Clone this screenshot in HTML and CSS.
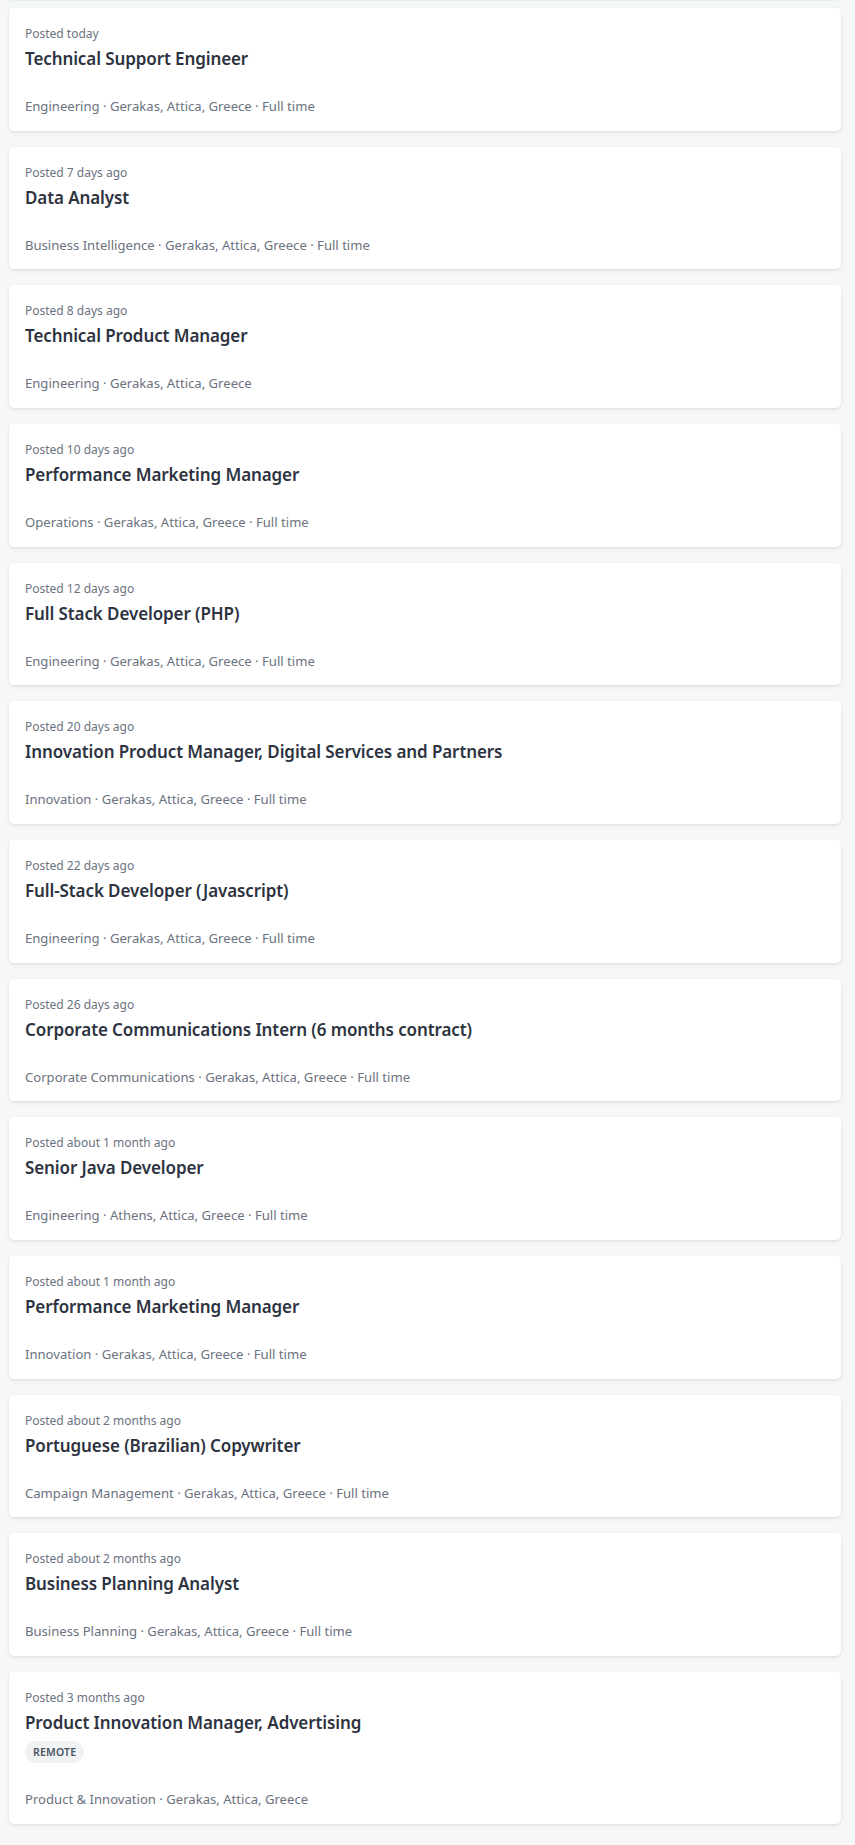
FILE: index.html
```html
<!DOCTYPE html>
<html>
<head>
<meta charset="utf-8">
<link rel="stylesheet" href="styles.css">
</head>
<body>
<div class="topline"></div>
<ul class="jobs">
  <li class="card"><div class="posted">Posted today</div><div class="title">Technical Support Engineer</div><div class="meta">Engineering · Gerakas, Attica, Greece · Full time</div></li>
  <li class="card"><div class="posted">Posted 7 days ago</div><div class="title">Data Analyst</div><div class="meta">Business Intelligence · Gerakas, Attica, Greece · Full time</div></li>
  <li class="card"><div class="posted">Posted 8 days ago</div><div class="title">Technical Product Manager</div><div class="meta">Engineering · Gerakas, Attica, Greece</div></li>
  <li class="card"><div class="posted">Posted 10 days ago</div><div class="title">Performance Marketing Manager</div><div class="meta">Operations · Gerakas, Attica, Greece · Full time</div></li>
  <li class="card"><div class="posted">Posted 12 days ago</div><div class="title">Full Stack Developer (PHP)</div><div class="meta">Engineering · Gerakas, Attica, Greece · Full time</div></li>
  <li class="card"><div class="posted">Posted 20 days ago</div><div class="title">Innovation Product Manager, Digital Services and Partners</div><div class="meta">Innovation · Gerakas, Attica, Greece · Full time</div></li>
  <li class="card"><div class="posted">Posted 22 days ago</div><div class="title">Full-Stack Developer (Javascript)</div><div class="meta">Engineering · Gerakas, Attica, Greece · Full time</div></li>
  <li class="card"><div class="posted">Posted 26 days ago</div><div class="title">Corporate Communications Intern (6 months contract)</div><div class="meta">Corporate Communications · Gerakas, Attica, Greece · Full time</div></li>
  <li class="card"><div class="posted">Posted about 1 month ago</div><div class="title">Senior Java Developer</div><div class="meta">Engineering · Athens, Attica, Greece · Full time</div></li>
  <li class="card"><div class="posted">Posted about 1 month ago</div><div class="title">Performance Marketing Manager</div><div class="meta">Innovation · Gerakas, Attica, Greece · Full time</div></li>
  <li class="card"><div class="posted">Posted about 2 months ago</div><div class="title">Portuguese (Brazilian) Copywriter</div><div class="meta">Campaign Management · Gerakas, Attica, Greece · Full time</div></li>
  <li class="card"><div class="posted">Posted about 2 months ago</div><div class="title">Business Planning Analyst</div><div class="meta">Business Planning · Gerakas, Attica, Greece · Full time</div></li>
  <li class="card"><div class="posted">Posted 3 months ago</div><div class="title">Product Innovation Manager, Advertising</div><div class="tags"><span class="tag">REMOTE</span></div><div class="meta">Product &amp; Innovation · Gerakas, Attica, Greece</div></li>
</ul>
</body>
</html>
```
FILE: styles.css
```css
html, body {
  margin: 0;
  padding: 0;
  background: #f6f7f7;
  font-family: "Noto Sans", "Open Sans", sans-serif;
}
.topline {
  height: 1px;
  margin: 0 18px 0 10px;
  background: #e3eef7;
}
.jobs {
  list-style: none;
  margin: 0;
  padding: 7px 14px 20px 9px;
  display: flex;
  flex-direction: column;
  gap: 16px;
}
.card {
  background: #ffffff;
  border-radius: 5px;
  box-shadow: 0 1px 3px rgba(0, 0, 0, 0.08), 0 2px 6px rgba(0, 0, 0, 0.04);
  padding: 15px 16px 14.67px;
  display: flex;
  flex-direction: column;
}
.posted {
  font-size: 12px;
  line-height: 21px;
  color: #6b7280;
}
.title {
  font-size: 17px;
  line-height: 30px;
  font-weight: 600;
  letter-spacing: -0.1px;
  color: #2d3340;
}
.tags {
  margin: 3px 0 4px;
  display: flex;
  gap: 6px;
}
.tag {
  display: inline-block;
  background: #f1f2f4;
  color: #4b5563;
  font-size: 10.5px;
  font-weight: 600;
  line-height: 22px;
  padding: 0 8px;
  border-radius: 11px;
  letter-spacing: 0.2px;
}
.meta {
  margin-top: 22px;
  font-size: 13.1px;
  line-height: 20px;
  color: #6b7280;
}
```
